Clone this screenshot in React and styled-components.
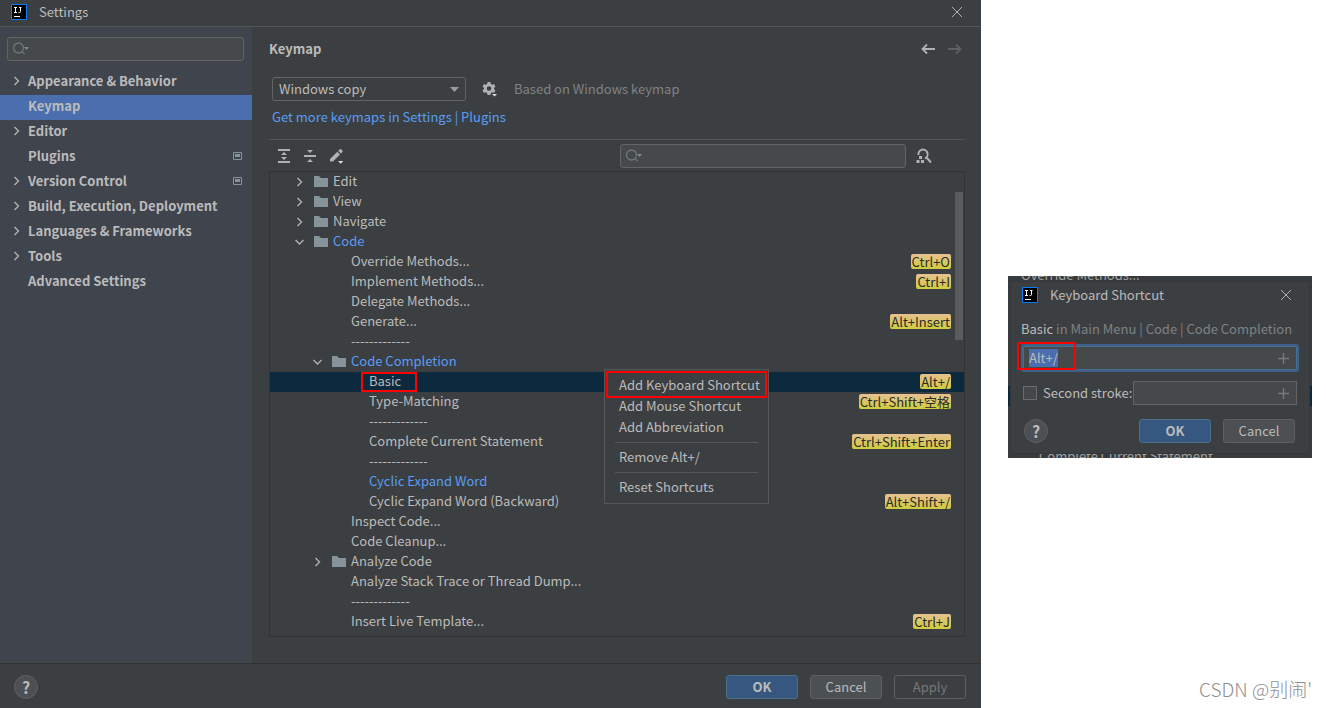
import React, { useEffect, useRef } from "react";
import styled, { createGlobalStyle, css } from "styled-components";

const color = {
  panel: "#3c3f41",
  sidebar: "#40444d",
  field: "#45494a",
  line: "#515456",
  dark: "#323232",
  border: "#646464",
  text: "#bbbbbb",
  muted: "#7f8284",
  link: "#589df6",
  accent: "#4b6eaf",
  icon: "#afb1b3",
  folder: "#87939a",
  mark: "#ff0000",
};

const GlobalStyle = createGlobalStyle`
  *, *::before, *::after { box-sizing: border-box; }
  body {
    margin: 0;
    background: #ffffff;
    color: ${color.text};
    font: 13px/20px "Noto Sans CJK SC", "Noto Sans", sans-serif;
  }
  button, input, select { font: inherit; color: inherit; }
  ul { list-style: none; margin: 0; padding: 0; }
  svg { display: block; flex: none; }
`;

/* ---------- shared parts ---------- */

const Page = styled.div`
  display: flex;
  min-height: 100vh;
`;

const IconButton = styled.button`
  display: flex;
  align-items: center;
  justify-content: center;
  width: 16px;
  height: 16px;
  padding: 0;
  border: 0;
  background: none;
  color: ${(p) => (p.$dim ? "#5e6163" : color.icon)};
`;

const Button = styled.button`
  width: 72px;
  height: 24px;
  padding: 0 0 1px;
  line-height: 20px;
  border-radius: 3px;
  border: 1px solid #5e6060;
  background: #4c5052;
  ${(p) =>
    p.$primary &&
    css`
      border-color: #4c708c;
      background: #365880;
      font-weight: 700;
    `}
  &:disabled {
    background: none;
    color: #777777;
  }
`;

const HelpButton = styled.button`
  width: 24px;
  height: 24px;
  padding: 0 0 1px;
  border: 1px solid #5e6060;
  border-radius: 50%;
  background: #4c5052;
  font-size: 16px;
  font-weight: 700;
  line-height: 20px;
`;

const Spacer = styled.span`
  flex: 1;
`;

const Chevron = ({ open }) => (
  <svg width="12" height="12" viewBox="0 0 12 12" fill="none" stroke={color.icon} strokeWidth="1.4">
    <path d={open ? "M1.5 4 L5.5 8 L9.5 4" : "M3.5 2 L7.5 6 L3.5 10"} />
  </svg>
);

const Folder = () => (
  <svg width="14" height="12" viewBox="0 0 14 12" fill={color.folder}>
    <path d="M0 0 H5 L7 2 H14 V11 H0 Z" />
  </svg>
);

const ProjectMark = () => (
  <svg width="9" height="8" viewBox="0 0 9 8">
    <path d="M.5 .5 H8.5 V7.5 H.5 Z" fill="none" stroke="#87939a" />
    <path d="M2 2 H7 V5 H2 Z" fill="#87939a" />
  </svg>
);

const AppLogo = () => (
  <svg width="16" height="16" viewBox="0 0 16 16" fill="none">
    <path d="M.5 .5 H15.5 V15.5 H.5 Z" fill="#000" stroke="#087cfa" />
    <path d="M3 3.5 H6 M4.5 3 V9 M3 8.5 H6 M8 3.5 H10.5 M9.5 3 V7.5 Q9.5 8.5 8.5 8.5 H7.5" stroke="#fff" />
    <path d="M3 12.5 H9" stroke="#fff" />
  </svg>
);

const Cross = () => (
  <svg width="12" height="12" viewBox="0 0 12 12" stroke={color.icon}>
    <path d="M1 1 L11 11 M11 1 L1 11" />
  </svg>
);

const Arrow = ({ flip }) => (
  <svg width="14" height="12" viewBox="0 0 14 12" fill="none" stroke="currentColor" strokeWidth="1.8">
    <path d={flip ? "M0 6 H12 M8 1.5 L12.5 6 L8 10.5" : "M14 6 H2 M6 1.5 L1.5 6 L6 10.5"} />
  </svg>
);

const SearchGlyph = () => (
  <svg width="18" height="14" viewBox="0 0 18 14" fill="none" stroke="#6e767b" strokeWidth="1.3">
    <circle cx="6.5" cy="6" r="5" />
    <path d="M10 9.6 L12.6 12.4" />
    <path d="M12 5 H17 L14.5 8 Z" fill="#7f8b91" stroke="none" />
  </svg>
);

const Gear = () => (
  <svg width="16" height="16" viewBox="0 0 16 16">
    <path
      fill={color.icon}
      fillRule="evenodd"
      d="M5.6 1 H8.4 L8.9 3 L10.1 3.7 L12 3.1 L13.4 5.5 L12 6.9 V8.1 L13.4 9.5 L12 11.9 L10.1 11.3 L8.9 12 L8.4 14 H5.6 L5.1 12 L3.9 11.3 L2 11.9 L.6 9.5 L2 8.1 V6.9 L.6 5.5 L2 3.1 L3.9 3.7 L5.1 3 Z M7 5.2 A2.3 2.3 0 1 0 7 9.8 A2.3 2.3 0 1 0 7 5.2 Z"
    />
    <path d="M9 12 H16 V16 H9 Z" fill={color.panel} />
    <path d="M10 13 H15 L12.5 15.5 Z" fill="#dddddd" />
  </svg>
);

const ExpandAll = () => (
  <svg width="14" height="16" viewBox="0 0 14 16" fill={color.icon}>
    <path d="M1 1 H13 V3 H1 Z M1 13 H13 V15 H1 Z M7 4 L10 7 H4 Z M4 9 H10 L7 12 Z" />
  </svg>
);

const CollapseAll = () => (
  <svg width="14" height="16" viewBox="0 0 14 16" fill={color.icon}>
    <path d="M1 7 H13 V9 H1 Z M4 2 H10 L7 5 Z M7 11 L10 14 H4 Z" />
  </svg>
);

const Pencil = () => (
  <svg width="16" height="16" viewBox="0 0 16 16" fill={color.icon}>
    <path d="M2 11 L9.3 3.7 L12 6.4 L5 13.6 H2 Z M10.1 2.9 L11.8 1.2 Q12.6 .6 13.4 1.4 L14.4 2.4 Q15.1 3.2 14.5 3.9 L12.8 5.6 Z" />
    <path d="M10 13 H15.4 L12.7 15.8 Z" fill="#dddddd" />
  </svg>
);

const FindByShortcut = () => (
  <svg width="16" height="16" viewBox="0 0 16 16" fill="none" stroke={color.icon} strokeWidth="2">
    <path d="M2.5 7 A4.6 4.6 0 1 1 9 10.3 M10.5 9.5 L15 14.5" />
    <path d="M3 8 H6 V11 H3 Z M.5 12 H3.5 V15 H.5 Z M5 12 H8 V15 H5 Z" fill={color.icon} stroke="none" />
  </svg>
);

const Plus = () => (
  <svg width="11" height="11" viewBox="0 0 11 11" stroke="#74787a" strokeWidth="1.4">
    <path d="M5.5 0 V11 M0 5.5 H11" />
  </svg>
);

/* ---------- settings window ---------- */

const Window = styled.main`
  flex: 1;
  min-width: 0;
  display: flex;
  flex-direction: column;
  background: ${color.panel};
`;

const TitleBar = styled.header`
  display: flex;
  align-items: center;
  gap: 12px;
  height: 27px;
  padding: 0 16px 2px 11px;
  border-bottom: 1px solid ${color.line};
`;

const Body = styled.div`
  flex: 1;
  display: flex;
`;

const Sidebar = styled.nav`
  width: 252px;
  flex: none;
  padding-top: 10px;
  background: ${color.sidebar};
`;

const SearchBox = styled.label`
  display: flex;
  align-items: center;
  height: 24px;
  padding-left: 4px;
  border: 1px solid ${color.border};
  border-radius: 3px;
  background: ${color.field};
  ${(p) => (p.$wide ? "width: 286px;" : "margin: 0 8px 9px 7px;")}
`;

const SearchInput = styled.input`
  flex: 1;
  min-width: 0;
  padding: 0 4px;
  border: 0;
  outline: 0;
  background: none;
`;

const NavLink = styled.a`
  display: flex;
  align-items: center;
  height: 25px;
  padding: 0 10px 3px 11px;
  font-weight: 700;
  color: ${color.text};
  text-decoration: none;
  background: ${(p) => (p.$active ? color.accent : "none")};
`;

const NavIcon = styled.span`
  width: 17px;
  flex: none;
`;

const Content = styled.section`
  flex: 1;
  min-width: 0;
  display: flex;
  flex-direction: column;
  padding: 0 16px 26px 17px;
`;

const ContentHead = styled.div`
  display: flex;
  align-items: center;
  gap: 11px;
  height: 44px;
  padding-right: 2px;
`;

const Heading = styled.h1`
  margin: 0;
  font-size: 13px;
  line-height: 20px;
`;

const SchemeRow = styled.div`
  display: flex;
  align-items: center;
  margin: 6px 0 0 3px;
`;

const SelectWrap = styled.span`
  display: grid;
  align-items: center;
  width: 194px;
  margin-right: 16px;
  > * { grid-area: 1 / 1; }
  > svg { justify-self: end; margin-right: 7px; pointer-events: none; }
`;

const SchemeSelect = styled.select`
  appearance: none;
  height: 24px;
  padding: 0 6px;
  border: 1px solid ${color.border};
  border-radius: 3px;
  background: ${color.panel};
`;

const Note = styled.span`
  margin-left: 16px;
  color: ${color.muted};
`;

const MoreLink = styled.a`
  align-self: flex-start;
  margin: 6px 0 12px 3px;
  color: ${color.link};
  text-decoration: none;
`;

const Toolbar = styled.div`
  display: flex;
  align-items: center;
  gap: 10px;
  height: 32px;
  padding: 1px 33px 0 7px;
  border-top: 1px solid ${color.line};
`;

const TreeFrame = styled.div`
  position: relative;
  flex: 1;
  border: 1px solid ${color.dark};
`;

const TreeRow = styled.li`
  display: flex;
  align-items: center;
  height: 20px;
  padding: 0 13px 0 ${(p) => 24 + p.$level * 18}px;
  color: ${(p) => (p.$link ? color.link : color.text)};
  background: ${(p) => (p.$selected ? "#0d293e" : "none")};
`;

const Twist = styled.span`
  width: 20px;
  flex: none;
`;

const FolderSlot = styled.span`
  width: 19px;
  flex: none;
`;

const RowLabel = styled.span`
  position: relative;
  flex: 1;
  height: 20px;
  line-height: 18px;
`;

const Mark = styled.span`
  position: absolute;
  border: 2px solid ${color.mark};
  pointer-events: none;
`;

const RowMark = styled(Mark)`
  top: 0;
  left: -8px;
  width: 56px;
  height: 20px;
`;

const Shortcut = styled.kbd`
  margin-bottom: 2px;
  padding: 0 1px;
  border-radius: 2px;
  background: linear-gradient(#e6c191, #d0cc3c);
  color: #2b2b2b;
  font: 13px/15px "Noto Sans CJK SC", sans-serif;
`;

const ScrollThumb = styled.span`
  position: absolute;
  top: 20px;
  right: 1px;
  width: 8px;
  height: 148px;
  background: #595b5d;
`;

const Menu = styled.ul`
  position: absolute;
  z-index: 1;
  top: 197px;
  left: 334px;
  width: 165px;
  padding: 5px 0;
  border: 1px solid #55585a;
  background: ${color.panel};
`;

const MenuItem = styled.button`
  display: block;
  width: 100%;
  height: 21px;
  padding: 0 0 2px 14px;
  border: 0;
  background: none;
  line-height: 19px;
  text-align: left;
`;

const MenuLine = styled.li`
  height: 1px;
  margin: 4px 10px;
  background: #55585a;
`;

const MenuMark = styled(Mark)`
  top: 1px;
  left: 1px;
  width: 161px;
  height: 27px;
`;

const Footer = styled.footer`
  display: flex;
  align-items: center;
  gap: 12px;
  height: 45px;
  padding: 2px 15px 0 14px;
  border-top: 1px solid ${color.dark};
`;

/* ---------- shortcut dialog ---------- */

const Aside = styled.aside`
  width: 345px;
  flex: none;
  display: flex;
  flex-direction: column;
  justify-content: space-between;
  padding: 276px 14px 7px 27px;
  background: #ffffff;
`;

const Clip = styled.div`
  position: relative;
  height: 182px;
  overflow: hidden;
  background: #383b3d;
`;

const BehindText = styled.span`
  position: absolute;
  left: ${(p) => (p.$low ? 31 : 13)}px;
  ${(p) => (p.$low ? "bottom: -8px;" : "top: -11px;")}
  color: #a0a2a3;
`;

const BehindRow = styled.span`
  position: absolute;
  top: 110px;
  left: 0;
  width: 100%;
  height: 20px;
  background: #0d293e;
`;

const Dialog = styled.section`
  position: absolute;
  inset: 5px 2px 4px;
  display: flex;
  flex-direction: column;
  border: 1px solid #35383a;
  background: ${color.panel};
`;

const DialogTitle = styled.header`
  display: flex;
  align-items: center;
  gap: 12px;
  height: 27px;
  padding: 0 15px 2px 11px;
`;

const DialogText = styled.p`
  margin: 10px 0 6px 10px;
  color: ${color.muted};
  white-space: nowrap;
`;

const Strong = styled.span`
  color: ${color.text};
`;

const StrokeField = styled.div`
  position: relative;
  display: flex;
  align-items: center;
  height: 24px;
  padding: 0 7px 0 5px;
  border: 1px solid ${color.border};
  background: ${color.field};
  ${(p) => (p.$focused ? "margin: 1px 12px 11px; border-color: #466d94; outline: 2px solid #3d6185; border-radius: 1px;" : "flex: 1;")}
`;

const StrokeInput = styled.input`
  flex: 1;
  min-width: 0;
  width: 0;
  height: 18px;
  padding: 0;
  border: 0;
  outline: 0;
  background: none;
  line-height: 18px;
  &::selection { background: ${color.accent}; color: ${color.text}; }
`;

const FieldMark = styled(Mark)`
  top: -5px;
  left: -7px;
  width: 59px;
  height: 28px;
`;

const SecondRow = styled.div`
  display: flex;
  align-items: center;
  padding: 0 12px;
`;

const CheckLabel = styled.label`
  display: flex;
  align-items: center;
  gap: 6px;
  width: 110px;
  white-space: nowrap;
`;

const Check = styled.input`
  appearance: none;
  width: 14px;
  height: 14px;
  margin: 0;
  border: 1px solid #6b6b6b;
  background: #43494a;
`;

const DialogActions = styled.div`
  display: flex;
  align-items: center;
  gap: 12px;
  padding: 14px 14px 0 13px;
`;

const Watermark = styled.p`
  align-self: flex-end;
  margin: 0;
  color: #8f8f8f;
  font: 300 19px/24px "Noto Sans CJK SC", sans-serif;
`;

const sections = [
  { name: "Appearance & Behavior", group: true },
  { name: "Keymap", active: true },
  { name: "Editor", group: true },
  { name: "Plugins", project: true },
  { name: "Version Control", group: true, project: true },
  { name: "Build, Execution, Deployment", group: true },
  { name: "Languages & Frameworks", group: true },
  { name: "Tools", group: true },
  { name: "Advanced Settings" },
];

const DASHES = "-------------";

const rows = [
  { name: "Edit", level: 0, folder: true },
  { name: "View", level: 0, folder: true },
  { name: "Navigate", level: 0, folder: true },
  { name: "Code", level: 0, folder: true, open: true, link: true },
  { name: "Override Methods...", level: 1, keys: "Ctrl+O" },
  { name: "Implement Methods...", level: 1, keys: "Ctrl+I" },
  { name: "Delegate Methods...", level: 1 },
  { name: "Generate...", level: 1, keys: "Alt+Insert" },
  { name: DASHES, level: 1 },
  { name: "Code Completion", level: 1, folder: true, open: true, link: true },
  { name: "Basic", level: 2, keys: "Alt+/", selected: true },
  { name: "Type-Matching", level: 2, keys: "Ctrl+Shift+空格" },
  { name: DASHES, level: 2 },
  { name: "Complete Current Statement", level: 2, keys: "Ctrl+Shift+Enter" },
  { name: DASHES, level: 2 },
  { name: "Cyclic Expand Word", level: 2, link: true },
  { name: "Cyclic Expand Word (Backward)", level: 2, keys: "Alt+Shift+/" },
  { name: "Inspect Code...", level: 1 },
  { name: "Code Cleanup...", level: 1 },
  { name: "Analyze Code", level: 1, folder: true },
  { name: "Analyze Stack Trace or Thread Dump...", level: 1 },
  { name: DASHES, level: 1 },
  { name: "Insert Live Template...", level: 1, keys: "Ctrl+J" },
];

function KeymapTree() {
  return (
    <TreeFrame>
      <ul>
        {rows.map((row, i) => (
          <TreeRow key={i} $level={row.level} $link={row.link} $selected={row.selected}>
            {row.folder ? (
              <>
                <Twist>
                  <Chevron open={row.open} />
                </Twist>
                <FolderSlot>
                  <Folder />
                </FolderSlot>
              </>
            ) : (
              <>
                <Twist />
                <FolderSlot />
              </>
            )}
            <RowLabel>
              {row.name}
              {row.selected && <RowMark />}
            </RowLabel>
            {row.keys && <Shortcut>{row.keys}</Shortcut>}
          </TreeRow>
        ))}
      </ul>
      <ScrollThumb />
      <Menu>
        <li><MenuItem>Add Keyboard Shortcut</MenuItem></li>
        <li><MenuItem>Add Mouse Shortcut</MenuItem></li>
        <li><MenuItem>Add Abbreviation</MenuItem></li>
        <MenuLine />
        <li><MenuItem>Remove Alt+/</MenuItem></li>
        <MenuLine />
        <li><MenuItem>Reset Shortcuts</MenuItem></li>
        <MenuMark as="li" />
      </Menu>
    </TreeFrame>
  );
}

function Settings() {
  return (
    <Window>
      <TitleBar>
        <AppLogo />
        Settings
        <Spacer />
        <IconButton aria-label="Close settings"><Cross /></IconButton>
      </TitleBar>
      <Body>
        <Sidebar>
          <SearchBox>
            <SearchGlyph />
            <SearchInput aria-label="Search settings" />
          </SearchBox>
          {sections.map((s) => (
            <NavLink key={s.name} href="#" $active={s.active}>
              <NavIcon>{s.group && <Chevron />}</NavIcon>
              {s.name}
              <Spacer />
              {s.project && <ProjectMark />}
            </NavLink>
          ))}
        </Sidebar>
        <Content>
          <ContentHead>
            <Heading>Keymap</Heading>
            <Spacer />
            <IconButton aria-label="Back"><Arrow /></IconButton>
            <IconButton aria-label="Forward" $dim><Arrow flip /></IconButton>
          </ContentHead>
          <SchemeRow>
            <SelectWrap>
              <SchemeSelect aria-label="Keymap scheme" defaultValue="copy">
                <option value="copy">Windows copy</option>
              </SchemeSelect>
              <svg width="9" height="5" viewBox="0 0 9 5" fill="#9a9da0">
                <path d="M0 0 H9 L4.5 5 Z" />
              </svg>
            </SelectWrap>
            <IconButton aria-label="Scheme actions"><Gear /></IconButton>
            <Note>Based on Windows keymap</Note>
          </SchemeRow>
          <MoreLink href="#">Get more keymaps in Settings | Plugins</MoreLink>
          <Toolbar>
            <IconButton aria-label="Expand all"><ExpandAll /></IconButton>
            <IconButton aria-label="Collapse all"><CollapseAll /></IconButton>
            <IconButton aria-label="Edit shortcut"><Pencil /></IconButton>
            <Spacer />
            <SearchBox $wide>
              <SearchGlyph />
              <SearchInput aria-label="Search actions" />
            </SearchBox>
            <IconButton aria-label="Find actions by shortcut"><FindByShortcut /></IconButton>
          </Toolbar>
          <KeymapTree />
        </Content>
      </Body>
      <Footer>
        <HelpButton aria-label="Settings help">?</HelpButton>
        <Spacer />
        <Button $primary>OK</Button>
        <Button>Cancel</Button>
        <Button disabled>Apply</Button>
      </Footer>
    </Window>
  );
}

function ShortcutDialog() {
  const stroke = useRef(null);
  useEffect(() => {
    stroke.current.focus();
    stroke.current.select();
  }, []);
  return (
    <Clip>
      <BehindText>Override Methods...</BehindText>
      <BehindRow />
      <BehindText $low>Complete Current Statement</BehindText>
      <Dialog aria-label="Keyboard Shortcut">
        <DialogTitle>
          <AppLogo />
          Keyboard Shortcut
          <Spacer />
          <IconButton aria-label="Close dialog"><Cross /></IconButton>
        </DialogTitle>
        <DialogText>
          <Strong>Basic</Strong> in Main Menu | Code | Code Completion
        </DialogText>
        <StrokeField $focused>
          <StrokeInput ref={stroke} aria-label="First stroke" defaultValue="Alt+/" />
          <Plus />
          <FieldMark />
        </StrokeField>
        <SecondRow>
          <CheckLabel>
            <Check type="checkbox" />
            Second stroke:
          </CheckLabel>
          <StrokeField>
            <StrokeInput aria-label="Second stroke keys" />
            <Plus />
          </StrokeField>
        </SecondRow>
        <DialogActions>
          <HelpButton aria-label="Shortcut help">?</HelpButton>
          <Spacer />
          <Button $primary>OK</Button>
          <Button>Cancel</Button>
        </DialogActions>
      </Dialog>
    </Clip>
  );
}

export default function App() {
  return (
    <>
      <GlobalStyle />
      <Page>
        <Settings />
        <Aside>
          <ShortcutDialog />
          <Watermark>CSDN @别闹'</Watermark>
        </Aside>
      </Page>
    </>
  );
}
